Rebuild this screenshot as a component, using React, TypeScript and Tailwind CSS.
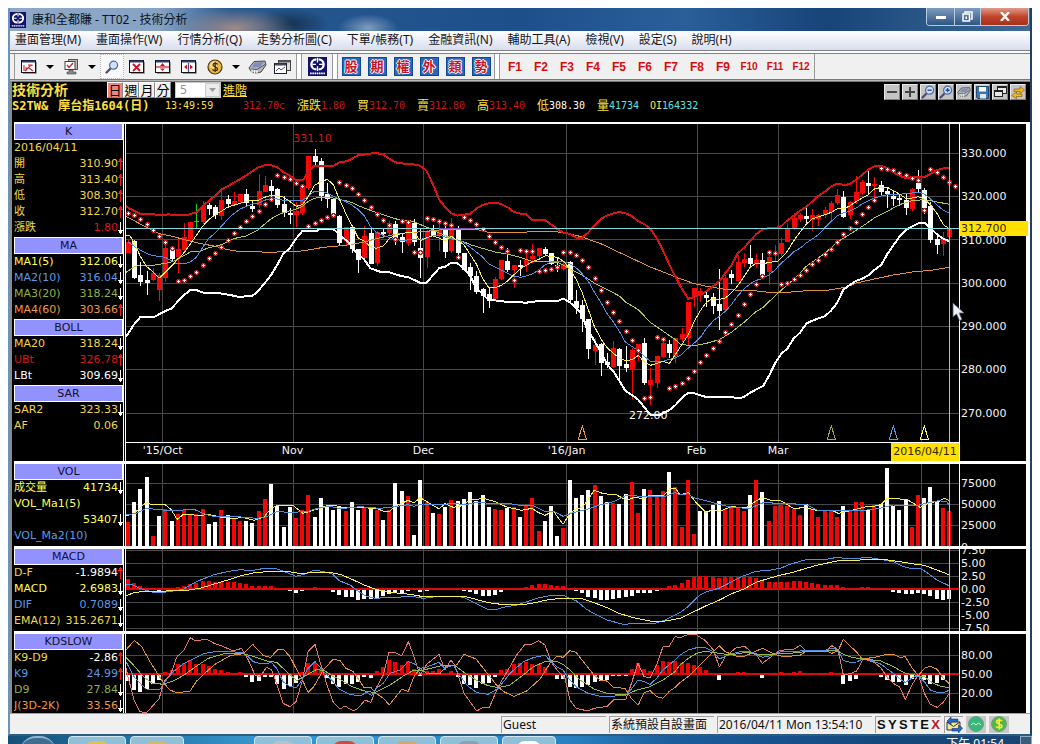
import React from 'react';
import clsx from 'clsx';

type Segment = [number, string];
type Tone = 'gold' | 'yellow' | 'blue' | 'green' | 'orange' | 'red' | 'white';

// Chart space: 3 units per pixel, plot area starts at x = 18
const STEP = 18.66;
const PLOT_LEFT = 18;
const PLOT_WIDTH = 2499;
const MONTH_LINES = [127, 520, 910, 1339, 1733, 1975, 2404];
const CURSOR_X = 2488;

const snap = (v: number) => Math.round((v - PLOT_LEFT) / 3) * 3 + PLOT_LEFT;
const barX = (i: number) => snap(25 + STEP * i - 7);

// open, high, low, close
const CANDLES: number[][] = [
  [404, 365, 404, 372], [370, 365, 484, 480], [471, 432, 503, 491], [486, 460, 530, 495], [486, 450, 490, 465],
  [516, 465, 548, 471], [480, 375, 492, 390], [390, 385, 430, 423], [417, 365, 465, 393], [396, 315, 400, 357],
  [363, 312, 370, 312], [310, 258, 330, 310], [312, 249, 318, 264], [261, 255, 291, 273], [267, 260, 302, 290],
  [294, 213, 306, 246], [243, 231, 270, 258], [262, 222, 264, 249], [253, 228, 258, 228], [228, 213, 264, 254],
  [264, 250, 282, 273], [261, 168, 270, 219], [222, 174, 222, 201], [204, 186, 240, 218], [213, 210, 270, 261],
  [258, 235, 297, 285], [285, 270, 318, 291], [291, 252, 327, 279], [285, 200, 290, 207], [210, 114, 215, 114],
  [114, 93, 140, 132], [129, 120, 249, 234], [228, 195, 270, 243], [243, 240, 294, 291], [294, 290, 380, 375],
  [369, 327, 384, 327], [327, 321, 405, 393], [393, 393, 465, 426], [420, 324, 425, 354], [345, 333, 438, 438],
  [435, 340, 444, 342], [342, 330, 360, 348], [345, 309, 354, 315], [318, 309, 381, 360], [357, 345, 405, 372],
  [375, 306, 384, 312], [315, 303, 384, 372], [390, 330, 480, 420], [417, 335, 450, 339], [339, 320, 357, 354],
  [351, 315, 400, 336], [336, 310, 420, 402], [399, 300, 406, 333], [333, 324, 410, 405], [405, 405, 460, 456],
  [447, 435, 516, 474], [474, 460, 528, 522], [513, 510, 585, 534], [528, 510, 570, 549], [543, 477, 546, 483],
  [483, 426, 486, 426], [429, 390, 462, 456], [456, 441, 510, 441], [441, 426, 474, 447], [441, 395, 462, 426],
  [423, 378, 435, 414], [414, 390, 420, 390], [393, 387, 411, 408], [405, 405, 441, 438], [441, 420, 462, 453],
  [453, 432, 459, 438], [432, 430, 552, 546], [549, 516, 588, 570], [561, 546, 642, 603], [603, 603, 723, 693],
  [699, 660, 741, 681], [678, 675, 774, 735], [732, 705, 750, 741], [747, 669, 750, 690], [693, 690, 786, 744],
  [738, 684, 762, 750], [753, 690, 843, 696], [702, 678, 730, 678], [675, 660, 801, 795], [801, 750, 861, 786],
  [795, 714, 810, 714], [717, 665, 720, 675], [678, 666, 720, 705], [714, 660, 735, 660], [663, 630, 672, 648],
  [660, 552, 684, 552], [537, 510, 567, 510], [530, 510, 552, 518], [531, 522, 567, 540], [537, 525, 588, 564],
  [558, 453, 636, 579], [576, 470, 578, 480], [468, 456, 498, 480], [489, 410, 490, 432], [435, 405, 447, 423],
  [420, 381, 450, 438], [438, 408, 450, 426], [426, 405, 476, 471], [462, 405, 501, 417], [410, 381, 432, 405],
  [408, 360, 414, 375], [372, 315, 372, 333], [333, 285, 336, 300], [303, 285, 312, 291], [294, 261, 318, 303],
  [306, 273, 339, 290], [302, 288, 324, 292], [291, 267, 300, 276], [282, 250, 310, 255], [255, 213, 260, 231],
  [237, 219, 300, 297], [291, 248, 303, 252], [249, 174, 258, 222], [225, 186, 231, 192], [195, 158, 228, 204],
  [204, 177, 237, 198], [201, 189, 230, 222], [219, 207, 270, 228], [234, 219, 264, 243], [240, 228, 264, 246],
  [246, 225, 291, 270], [273, 210, 279, 213], [195, 156, 222, 213], [216, 210, 288, 270], [264, 252, 375, 366],
  [363, 354, 408, 381], [378, 342, 414, 360], [357, 330, 360, 330],
];

const SAR = [
  286, 292, 304, 319, 337, 355, 373, 391, 490, 487, 475, 463, 441, 421, 406, 388, 367, 346, 328, 310, 295, 280, 259, 244,
  172, 178, 184, 196, 205, 325, 315, 307, 297, 292, 192, 202, 211, 229, 247, 268, 289, 307, 322, 365, 310, 313, 403, 403,
  300, 304, 310, 316, 322, 418, 298, 307, 319, 334, 355, 373, 388, 400, 487, 397, 400, 400, 460, 457, 454, 447, 403, 403,
  412, 427, 448, 481, 517, 552, 583, 610, 640, 667, 697, 841, 838, 658, 664, 811, 805, 796, 781, 760, 733, 712, 691, 670,
  643, 619, 592, 559, 529, 499, 474, 403, 406, 499, 496, 484, 472, 457, 439, 427, 409, 394, 373, 349, 330, 313, 289, 268,
  247, 151, 154, 157, 166, 172, 181, 188, 278, 154, 163, 178, 193, 205,
];

// Bar tops; negative marks a down day
const VOLUME = [
  202, -141, -102, -66, 243, -183, 163, -198, 177, 165, 178, 177, 162, -207, -201, 165, -180, 192, 198, -198, -204, 168,
  132, -87, -153, -216, -156, 189, 165, 120, -186, -129, -153, -165, -153, 168, -141, -165, 156, -156, 165, -195, 165,
  -84, -108, 123, -240, -75, 140, -174, 177, -156, 135, -138, -132, -111, -138, -120, -156, 162, 165, -159, 157, -186,
  153, 129, 228, -198, -153, -243, 219, -75, -129, -120, -105, 90, -123, -142, 144, -147, -117, 81, 174, -102, 105, 126,
  108, -51, 96, 216, 75, 237, -168, -168, -150, -138, 162, 156, 159, 168, -120, 75, -111, 198, 153, 150, 153, 162, 180,
  -146, 162, 186, 165, 165, 186, -153, 165, 141, 141, -165, 150, -147, -39, -153, -165, -132, 216, 120, -129, -96, -138,
  159, 168,
];

const MACD_BARS = [
  30, 18, 9, 0, 0, -6, -4, 2, 6, 9, 15, 18, 24, 24, 22, 21, 21, 20, 18, 15, 9, 9, 9, 9, 0, 0, -6, -12, -6, 2, 6, 2, 0, -9,
  -18, -24, -24, -33, -30, -30, -28, -21, -15, -12, -12, -6, -3, -9, -6, -3, -2, 0, 0, 0, -6, -9, -15, -21, -21, -18, -9,
  -3, 2, 2, 6, 12, 15, 15, 12, 9, 9, 0, -6, -12, -24, -27, -33, -33, -30, -27, -24, -21, -12, -12, -12, -6, 2, 9, 12, 18,
  27, 36, 39, 39, 36, 33, 36, 36, 36, 36, 36, 33, 27, 21, 21, 21, 21, 24, 24, 21, 18, 15, 12, 12, 12, 6, 2, 2, 6, 6, 2, 0,
  0, -8, -12, -15, -15, -12, -15, -21, -30, -33, -30,
];

const KD_BARS = [
  -20, -48, -54, -45, -30, -18, 6, 12, 30, 33, 42, 30, 30, 24, 15, 12, 5, 2, 6, -9, -24, -21, -9, -9, -30, -45, -36, -27,
  6, 33, 33, 15, -12, -30, -40, -30, -30, -24, -9, -12, 9, 21, 42, 36, 27, 39, 15, -6, 9, 9, 15, 3, 9, -9, -30, -33, -42,
  -30, -27, -9, 12, 15, 30, 33, 36, 30, 30, 21, 0, -15, -15, -39, -42, -39, -33, -24, -21, -18, -6, -6, -6, 15, 33, 15, 9,
  27, 39, 36, 39, 33, 33, 27, 21, 12, 0, -18, 0, 0, 6, 6, 0, 0, -12, 0, 0, 6, 0, 6, 9, 0, 0, 0, 0, 6, 0, -30, -21, -15, 0,
  0, 0, -9, -18, -24, -24, -33, -15, -3, -18, -30, -27, -18, -3,
];

const MA5: Segment[] = [
  [0, '18,352 30,354 43,375 61,415 79,445 97,460 118,480 136,463 154,445 172,425 193,403 211,378 229,352 247,326 265,306 286,290 304,280 322,268 340,262 361,256 379,250 397,247 415,247 433,238 454,232 472,234 490,237 508,249 529,265 547,260 565,236 583,202 601,192 622,184 640,200 658,243 676,283 697,325 715,360 733,370 751,386 769,391 790,384 808,362 826,350'],
  [840, '0,348 20,344 43,345 61,368 79,360 97,353 118,360 136,370 154,354 172,368 190,378 211,410 229,438 247,480 265,507 286,509 304,502 322,490 340,472 361,452 379,442 397,431 415,425 436,413 454,415 472,418 490,430 508,450 529,485 547,525 565,575 583,625 604,665 622,690 640,706 658,720 676,728 697,725 715,712 733,732 751,742 772,736 790,730 808,736 826,710'],
  [1680, '0,688 25,650 43,610 61,578 79,553 97,542 118,544 136,540 154,525 172,505 193,474 211,447 229,436 247,438 268,433 292,430 304,420 322,400 340,370 361,341 379,318 397,303 415,297 436,290 454,283 472,272 490,272 508,265 529,250 547,240 565,230 583,213 604,208 622,208 640,218 658,228 676,240 697,240 715,236 733,243 751,260 772,288 790,320 808,332'],
];
const MA10: Segment[] = [
  [0, '25,373 43,385 61,396 79,406 97,413 118,415 136,418 154,428 172,438 193,437 211,432 229,418 247,390 265,362 286,345 304,325 322,305 340,288 361,273 379,265 397,258 415,256 433,247 454,241 472,243 490,247 508,246 529,249 547,247 565,235 583,220 601,219 622,225 640,235 658,243 676,250 697,262 715,275 733,293 751,325 769,343 790,352 808,358 826,362'],
  [840, '0,367 43,365 60,364 79,361 97,352 118,352 136,357 154,362 190,372 211,388 229,402 247,416 265,437 286,447 304,456 322,465 340,474 361,478 379,474 397,468 415,457 436,440 454,431 472,431 490,431 508,436 529,450 547,468 565,490 583,522 604,556 622,588 640,612 658,640 676,672 697,686 715,698 733,715 751,730 772,732 790,730 808,724 826,720'],
  [1680, '0,713 25,690 43,675 61,658 79,632 100,608 118,595 136,580 154,560 172,535 193,512 211,497 229,487 247,482 268,470 286,455 304,435 322,420 340,402 361,390 379,375 397,363 415,350 436,328 454,310 472,293 490,285 508,280 529,270 547,257 565,249 583,240 604,234 622,230 640,231 658,230 676,226 697,225 715,222 733,228 751,242 772,262 790,277 808,286'],
];
const MA20: Segment[] = [
  [0, '18,463 43,446 61,441 100,442 136,436 160,430 193,412 211,402 240,399 265,390 304,380 340,362 379,354 397,345 415,335 433,319 454,302 472,292 490,284 508,279 529,273 547,265 565,250 583,241 601,238 622,237 640,240 676,248 697,254 715,263 733,270 769,284 790,290 826,302'],
  [840, '0,306 25,307 43,312 79,327 118,345 154,360 190,371 211,380 247,391 286,402 322,408 361,418 397,430 436,431 472,433 490,441 508,452 547,472 583,495 622,515 658,534 676,552 715,575 751,613 790,640 826,665'],
  [1680, '0,678 25,682 50,682 79,676 118,665 154,643 193,612 229,580 250,568 268,550 300,520 340,485 379,445 436,405 472,372 508,350 547,325 583,300 622,280 658,260 697,248 733,245 772,252 808,259'],
];
const MA60: Segment[] = [
  [0, '18,295 61,318 118,347 154,354 193,365 229,374 286,385 322,395 355,400 400,401 454,403 490,401 529,401 565,396 610,388 655,384 697,379 733,372 769,362 808,353'],
  [840, '0,346 43,343 79,340 118,336 154,333 225,333 265,343 370,343 400,340 470,341 500,347 529,352 560,362 610,380 655,402 700,423 751,447 800,466'],
  [1680, '0,482 40,496 79,505 130,513 175,517 230,519 268,523 320,523 370,519 440,517 500,507 529,495 583,483 640,471 697,462 760,456 808,448'],
];
const UPPER: Segment[] = [
  [0, '18,265 35,275 61,288 79,288 130,291 145,289 160,291 205,290 229,283 247,266 265,250 286,233 304,215 340,195 379,172 415,148 433,142 454,142 472,148 490,162 508,172 529,187 550,186 565,160 583,143 601,143 640,144 658,133 680,130 697,122 715,111 740,109 765,104 790,110 808,122 826,133'],
  [840, '0,135 20,138 50,140 65,146 79,158 97,195 118,245 136,268 154,286 172,293 211,287 229,272 247,261 275,254 300,257 322,267 340,281 361,287 379,289 397,306 436,307 472,333 490,344 508,347 529,359 547,359 565,343 583,322 604,302 622,292 640,286 658,282 680,287 697,295 715,310 733,318 751,333 772,363 790,400 808,440 826,475'],
  [1680, '3,508 25,543 61,530 79,520 118,490 136,465 154,442 172,408 193,388 211,368 229,348 247,335 268,330 300,328 322,307 340,294 361,277 379,267 397,250 415,234 436,220 454,205 472,197 495,201 510,198 529,185 547,170 565,155 583,145 604,144 622,150 640,162 658,173 676,180 697,178 733,177 751,168 772,156 790,151 808,149'],
];
const LOWER: Segment[] = [
  [0, '18,657 40,622 61,597 103,597 118,588 136,579 154,572 172,552 190,533 211,516 229,516 250,524 300,526 340,533 361,538 379,534 397,534 415,518 433,497 454,470 472,440 490,407 508,392 529,361 547,339 592,339 600,332 640,333 658,350 676,365 690,378 697,390 715,408 733,425 751,451 780,461 808,463'],
  [840, '0,473 25,478 43,486 61,495 79,495 97,474 118,450 136,446 154,434 172,436 190,450 211,474 229,510 265,545 286,547 304,550 340,552 379,554 415,549 475,548 490,542 508,552 529,570 547,590 560,630 583,668 604,705 622,740 640,760 658,788 676,818 697,832 715,845 733,868 751,890 780,890 808,876 826,862'],
  [1680, '3,842 25,824 43,826 75,836 157,837 170,841 190,838 211,824 250,803 268,772 286,734 304,707 322,692 340,663 361,643 379,617 397,608 436,594 454,577 472,554 490,515 508,502 529,488 547,482 565,472 583,456 604,440 622,408 640,382 658,357 676,337 697,325 715,316 735,315 751,330 772,350 790,362 808,370'],
];
const VOL_MA5: Segment[] = [
  [-360, '378,183 402,175 430,150 440,142 456,150 495,149 513,163 531,193 552,177 600,182 625,178 660,186 700,190 730,188 762,196 792,186 813,160 831,151 880,152 909,175 960,160 985,150 1010,153'],
  [660, '0,157 60,158 108,160 130,168 150,168 165,153 183,146 204,136 222,144 240,128 258,138 297,162 315,146 340,157 360,154 390,136 430,130 465,140 500,156 545,166 576,160 594,172 615,181 640,168 669,208 690,175 708,162 726,158 744,135 762,106 790,116 830,120 860,136 880,128 912,130 930,120 970,123 990,101 1007,100'],
  [1680, '0,120 25,113 50,145 79,174 99,162 117,170 153,155 200,158 225,140 247,127 270,135 300,136 340,160 378,158 414,167 453,165 475,175 520,165 560,155 600,152 621,130 680,133 720,157 750,142 775,140 793,130 807,136'],
];
const VOL_MA10: Segment[] = [
  [-360, '378,180 410,175 440,160 520,168 580,162 610,176 640,184 700,184 770,190 800,185 831,170 870,172 920,170 960,158 990,154'],
  [660, '0,161 60,155 120,160 165,155 204,149 222,154 250,147 300,149 345,145 372,150 408,142 465,146 510,146 545,152 580,152 615,170 640,168 669,184 700,173 744,162 780,150 820,140 860,120 912,125 970,126 1005,113'],
  [1680, '0,120 25,116 40,128 70,135 117,148 160,158 210,160 250,143 330,146 378,149 414,166 480,168 560,165 600,160 640,150 715,151 740,144 775,137 800,140 807,150'],
];
const DIF: Segment[] = [
  [-360, '378,387 400,390 420,400 438,406 460,412 490,412 520,408 552,402 580,385 606,373 640,360 681,350 720,344 756,347 792,340 825,340 849,348 888,364 920,356 942,345 960,348 981,352 999,358 1017,376'],
  [660, '0,378 30,390 54,408 75,422 105,430 135,428 183,426 210,423 250,430 280,426 315,425 350,423 372,428 408,445 444,463 470,463 490,457 530,450 560,440 590,430 625,423 670,421 690,430 708,437 740,463 770,480 801,495 850,508 880,506 940,507 975,495 1005,480'],
  [1680, '0,473 20,458 42,436 60,420 79,410 117,400 150,383 192,362 228,349 267,346 303,339 330,328 378,314 440,313 471,307 510,312 564,307 600,313 639,320 670,335 690,340 720,340 740,352 771,375 807,392'],
];
const MACD: Segment[] = [
  [-360, '378,422 400,414 430,409 470,409 530,407 560,406 600,400 640,388 680,376 720,363 760,354 800,350 860,349 905,356 940,352 990,352'],
  [660, '0,358 36,373 72,390 108,403 150,412 210,418 250,425 300,425 350,424 380,426 408,433 444,443 483,448 540,450 580,444 630,433 690,429 730,432 762,443 801,458 837,475 876,487 930,498 975,498'],
  [1680, '0,490 42,470 79,452 117,436 153,417 192,402 228,382 267,370 303,360 339,352 378,340 414,330 471,318 540,315 600,312 640,317 696,326 732,331 771,345 807,359'],
];
const K9: Segment[] = [
  [-360, '378,620 402,665 425,690 438,702 480,703 495,680 520,650 552,625 580,612 610,596 650,589 730,592 760,620 785,627 815,623 830,640 849,680 870,695 890,697 906,675 924,640 945,620 970,648 999,680 1017,702'],
  [660, '0,703 30,718 60,723 80,712 95,722 108,700 130,685 150,655 180,645 205,620 222,626 240,640 260,636 297,622 315,640 340,630 355,655 380,690 410,713 444,718 475,700 510,655 550,620 580,608 615,600 633,620 651,636 669,645 687,672 708,695 744,715 790,726 858,720 876,700 894,675 912,680 930,688 950,670 969,645 1005,615'],
  [1680, '0,600 25,585 50,578 75,577 100,590 118,612 150,598 190,588 215,592 247,607 280,600 303,590 340,590 378,586 435,587 453,580 472,583 490,617 510,622 530,621 547,612 565,613 604,628 622,642 640,655 658,670 676,683 697,668 715,662 733,680 751,705 772,712 790,713 808,706'],
];
const D9: Segment[] = [
  [-360, '378,608 400,630 430,665 456,684 490,688 520,678 552,660 580,640 625,610 670,597 725,595 760,604 800,618 830,622 860,650 890,677 920,660 950,643 975,648 1000,665'],
  [660, '0,673 36,695 70,707 105,713 150,690 190,663 222,645 250,645 300,633 345,632 380,658 408,675 444,692 475,698 510,690 550,660 580,635 615,620 651,620 669,628 690,645 720,675 762,702 801,715 858,720 890,705 930,695 969,675 1005,650'],
  [1680, '0,630 25,610 50,595 75,589 118,595 150,600 200,592 250,600 290,597 340,594 390,588 440,588 472,587 490,598 520,608 550,612 600,617 640,635 676,655 715,662 733,665 760,685 780,693 808,699'],
];
const J_PINK: Segment[] = [
  [-360, '378,640 384,665 402,735 420,770 440,773 465,745 477,732 492,680 513,655 531,605 552,585 570,548 588,558 620,552 642,565 663,572 700,588 725,580 745,615 765,660 780,665 800,637 815,645 828,680 849,745 870,755 888,740 906,680 924,590 945,568 960,620 981,690 999,740'],
  [660, '0,762 15,753 40,768 54,760 75,735 93,742 108,700 130,660 147,592 165,592 185,603 205,560 222,605 240,660 260,628 297,598 315,645 333,615 345,632 372,715 390,740 410,768 430,757 448,757 475,695 510,635 530,600 555,568 575,568 595,557 615,570 633,620 651,645 675,670 690,735 708,760 744,768 762,760 801,754 820,735 858,733 876,680 894,625 912,665 930,668 950,630 969,575 987,575 1005,545'],
  [1680, '0,548 25,538 50,540 75,556 100,585 118,636 136,605 170,577 195,575 215,592 229,600 247,625 280,600 300,586 340,583 361,571 379,588 436,588 456,572 474,584 490,660 510,656 530,648 550,612 583,622 604,640 622,668 640,685 658,695 676,733 697,688 715,660 733,715 751,748 772,757 790,742 808,715'],
];
const J_ORANGE: Segment[] = [
  [-360, '378,585 403,556 425,575 450,620 490,683 510,705 530,713 570,709 590,678 620,650 645,628 690,602 730,596 758,568 790,602 812,607 835,582 850,583 870,605 888,640 906,672 924,712 940,697 970,645 1000,612'],
  [660, '0,617 18,640 40,650 72,697 93,698 108,715 130,730 148,750 185,703 205,709 222,665 240,640 260,655 300,655 320,632 350,630 372,598 408,612 430,640 475,697 495,712 522,724 560,708 600,672 633,620 651,603 669,607 690,587 708,592 730,620 762,660 780,675 800,678 820,697 855,700 876,733 895,750 912,713 930,707 950,725 969,730 987,710 1005,697'],
  [1680, '0,683 30,660 60,630 100,590 118,572 136,590 172,605 195,603 247,580 290,600 310,605 360,601 379,588 440,588 455,595 474,588 490,553 510,573 529,590 547,612 583,607 622,598 640,598 660,607 676,605 697,640 715,662 733,640 751,634 772,643 790,670 808,686'],
];

const toPoints = (segments: Segment[]) =>
  segments
    .flatMap(([dx, pts]) =>
      pts.split(' ').map((p) => {
        const [x, y] = p.split(',').map(Number);
        return `${x + dx},${y}`;
      })
    )
    .join(' ');

const Line = ({ data, color, width = 1 }: { data: Segment[]; color: string; width?: number }) => (
  <polyline
    points={toPoints(data)}
    fill="none"
    stroke={color}
    strokeWidth={width}
    strokeLinejoin="round"
    vectorEffect="non-scaling-stroke"
  />
);

const Plot = ({ top, height, rows, className, children }: {
  top: number;
  height: number;
  rows: number[];
  className: string;
  children: React.ReactNode;
}) => (
  <svg
    className={clsx('block w-full', className)}
    viewBox={`${PLOT_LEFT} ${top} ${PLOT_WIDTH} ${height}`}
    preserveAspectRatio="none"
    shapeRendering="crispEdges"
  >
    {rows.map((y) => (
      <rect key={y} x={PLOT_LEFT} y={y - 1} width={PLOT_WIDTH} height="3" fill="#484848" />
    ))}
    {MONTH_LINES.map((x) => (
      <rect key={x} x={snap(x - 1)} y={top} width="3" height={height} fill="#484848" />
    ))}
    {children}
    <rect x={snap(CURSOR_X - 1)} y={top} width="3" height={height} fill="#70d8d8" />
  </svg>
);

const Histogram = ({ values, base }: { values: number[]; base: number }) => (
  <>
    {values.map((v, i) =>
      v > 0 ? (
        <rect key={i} x={barX(i)} y={base - v} width="12" height={v} fill="#f00000" />
      ) : (
        <rect key={i} x={barX(i)} y={base} width="12" height={-v} fill="#ffffff" />
      )
    )}
    <rect x={PLOT_LEFT} y={base - 2} width={PLOT_WIDTH} height="5" fill="#e00808" />
  </>
);

// Parabolic SAR mark: white plus inside a red dot
const SarDot = ({ x, y }: { x: number; y: number }) => (
  <>
    <path d={`M${x - 6} ${y - 3}h3v-3h9v3h3v9h-3v3h-9v-3h-3z`} fill="#c81414" />
    <path d={`M${x - 3} ${y}h3v-3h3v3h3v3h-3v3h-3v-3h-3z`} fill="#fff" />
  </>
);

const Scale = ({ labels, className }: { labels: [string, number][]; className: string }) => (
  <svg className={clsx('block w-full', className)}>
    {labels.map(([label, y]) => (
      <text key={label} x="1" y={y} fill="#f4f4f4" fontSize="11">
        {label}
      </text>
    ))}
  </svg>
);

const TONES: Record<Tone, string> = {
  gold: 'text-[#f0d84a]',
  yellow: 'text-[#ffff50]',
  blue: 'text-[#5a9ae6]',
  green: 'text-[#8fb43c]',
  orange: 'text-[#ee9840]',
  red: 'text-[#d81818]',
  white: 'text-white',
};

interface Reading {
  label: string;
  value?: string;
  tone: Tone;
  valueTone?: Tone;
  dir?: 'up' | 'down';
}

const Arrow = ({ dir }: { dir?: 'up' | 'down' }) => (
  <svg width="5" height="12" viewBox="0 0 5 12" className="shrink-0" shapeRendering="crispEdges">
    {dir === 'up' && <path d="M2 0h1v1h1v2h1v1H3v8H2V4H0V3h1V1h1z" fill="#f01818" />}
    {dir === 'down' && <path d="M2 12h1v-1h1V9h1V8H3V0H2v8H0v1h1v2h1z" fill="#fff" />}
  </svg>
);

const Readings = ({ title, rows }: { title: string; rows: Reading[] }) => (
  <section>
    <h2 className="h-4 border border-t-0 border-white bg-[#9292ff] text-center leading-[15px] text-[#101030]">{title}</h2>
    <dl>
      {rows.map((r) => (
        <div key={r.label} className={clsx('flex h-4 items-center whitespace-nowrap', TONES[r.tone])}>
          <dt>{r.label}</dt>
          <dd className={clsx('ml-auto flex items-center', r.valueTone && TONES[r.valueTone])}>
            {r.value}
            <Arrow dir={r.dir} />
          </dd>
        </div>
      ))}
    </dl>
  </section>
);

const Panel = ({ side, plot, scale, className }: {
  side: React.ReactNode;
  plot: React.ReactNode;
  scale: React.ReactNode;
  className: string;
}) => (
  <div className={clsx('flex bg-black', className)}>
    <div className="mr-px w-[110px] shrink-0 overflow-hidden border-r border-white">{side}</div>
    <div className="relative min-w-0 flex-1 border-x border-white">{plot}</div>
    <div className="relative w-[66px] shrink-0">{scale}</div>
  </div>
);

const K_ROWS: Reading[] = [
  { label: '2016/04/11', tone: 'gold' },
  { label: '開', value: '310.90', tone: 'gold', dir: 'up' },
  { label: '高', value: '313.40', tone: 'gold', dir: 'up' },
  { label: '低', value: '308.30', tone: 'gold', dir: 'up' },
  { label: '收', value: '312.70', tone: 'gold', dir: 'up' },
  { label: '漲跌', value: '1.80', tone: 'gold', valueTone: 'red', dir: 'down' },
];
const MA_ROWS: Reading[] = [
  { label: 'MA1(5)', value: '312.06', tone: 'yellow', dir: 'down' },
  { label: 'MA2(10)', value: '316.04', tone: 'blue', dir: 'down' },
  { label: 'MA3(20)', value: '318.24', tone: 'green', dir: 'down' },
  { label: 'MA4(60)', value: '303.66', tone: 'orange', dir: 'up' },
];
const BOLL_ROWS: Reading[] = [
  { label: 'MA20', value: '318.24', tone: 'gold', dir: 'down' },
  { label: 'UBt', value: '326.78', tone: 'red', dir: 'up' },
  { label: 'LBt', value: '309.69', tone: 'white', dir: 'down' },
];
const SAR_ROWS: Reading[] = [
  { label: 'SAR2', value: '323.33', tone: 'gold', dir: 'down' },
  { label: 'AF', value: '0.06', tone: 'gold' },
];
const VOL_ROWS: Reading[] = [
  { label: '成交量', value: '41734', tone: 'yellow', dir: 'down' },
  { label: 'VOL_Ma1(5)', tone: 'yellow' },
  { label: '', value: '53407', tone: 'yellow', dir: 'down' },
  { label: 'VOL_Ma2(10)', tone: 'blue' },
];
const MACD_ROWS: Reading[] = [
  { label: 'D-F', value: '-1.9894', tone: 'gold', valueTone: 'white', dir: 'up' },
  { label: 'MACD', value: '2.6983', tone: 'yellow', dir: 'down' },
  { label: 'DIF', value: '0.7089', tone: 'blue', dir: 'down' },
  { label: 'EMA(12)', value: '315.2671', tone: 'gold', dir: 'down' },
];
const KD_ROWS: Reading[] = [
  { label: 'K9-D9', value: '-2.86', tone: 'gold', valueTone: 'white', dir: 'up' },
  { label: 'K9', value: '24.99', tone: 'blue', dir: 'up' },
  { label: 'D9', value: '27.84', tone: 'green', dir: 'down' },
  { label: 'J(3D-2K)', value: '33.56', tone: 'orange', dir: 'down' },
];

const MENU = [
  '畫面管理(M)', '畫面操作(W)', '行情分析(Q)', '走勢分析圖(C)', '下單/帳務(T)',
  '金融資訊(N)', '輔助工具(A)', '檢視(V)', '設定(S)', '說明(H)',
];

const MONTHS: [string, string][] = [
  ["'15/Oct", '4.4%'], ['Nov', '20%'], ['Dec', '35.7%'], ["'16/Jan", '52.9%'], ['Feb', '68.5%'], ['Mar', '78.3%'],
];

const MARKERS: [number, string][] = [[1387, '#f09848'], [2134, '#8fb43c'], [2320, '#5a9ae6'], [2413, '#ffff50']];

const Logo = ({ size }: { size: number }) => (
  <svg width={size} height={size} viewBox="0 0 18 18">
    <rect width="18" height="18" fill="#12126e" />
    <path d="M8 2.2a4.8 4.8 0 0 0 0 9.600M10 2.2a4.8 4.8 0 0 1 0 9.600" fill="none" stroke="#fff" strokeWidth="2.2" />
    <path d="M9 .8v4.400M9 8.800v4.400M4 7h3.500M10.500 7H14" stroke="#fff" strokeWidth="1.2" />
    <path d="M2 15.6h14" stroke="#fff" strokeWidth="1.6" strokeDasharray="1.5 .6" />
  </svg>
);

const Frame = ({ children }: { children: React.ReactNode }) => (
  <svg width="16" height="14" viewBox="0 0 16 14">
    <path d="M2 13.5h13.5V2" stroke="#999" fill="none" />
    <rect x=".5" y=".5" width="14" height="12" fill="#fff" stroke="#111" />
    <path d="M1 1.5h13" stroke="#2b3a78" strokeWidth="2" />
    {children}
  </svg>
);

const Lens = ({ sign }: { sign?: string }) => (
  <svg width="14" height="14" viewBox="0 0 14 14">
    <path d="M1.5 12.5l4-4" stroke="#5a4a70" strokeWidth="2.4" strokeLinecap="round" />
    <circle cx="8.6" cy="5.2" r="4" fill="#cfe2f8" stroke="#4a6aa0" strokeWidth="1.2" />
    {sign && <path d={sign} stroke="#1c4f9c" strokeWidth="1.4" />}
  </svg>
);

const Printer = () => (
  <svg width="19" height="14" viewBox="0 0 19 14">
    <path d="M1 8l5-6.5L17 1l1 4-5 7-4 1-5-.5z" fill="#b4b8be" stroke="#444" />
    <path d="M6.5 2.5L16 2l-4 5-8 .5z" fill="#7f8cc0" />
    <path d="M3 9l6 .5 8-5" stroke="#555" fill="none" />
    <path d="M4 13V9.5M6.5 13.5V10M9 13.5V10" stroke="#fff" strokeWidth="1.2" />
  </svg>
);

const ToolButton = ({ label, className = 'w-[26px]', children }: {
  label: string;
  className?: string;
  children: React.ReactNode;
}) => (
  <button type="button" aria-label={label} className={clsx('flex h-full shrink-0 items-center justify-center', className)}>
    {children}
  </button>
);

const DropArrow = ({ label }: { label: string }) => (
  <ToolButton label={label} className="w-4">
    <svg width="8" height="4" viewBox="0 0 8 4"><path d="M0 0h8L4 4z" fill="#000" /></svg>
  </ToolButton>
);

const Divider = () => <span className="h-full w-1.5 shrink-0 border-x border-[#9a9a9a] bg-white" />;

const Toolbar = () => (
  <div role="toolbar" className="flex h-[25px] items-center overflow-hidden bg-[#f0f0f0] pl-1">
    <span className="mr-px h-full w-px bg-[#9a9a9a]" />
    <ToolButton label="版面">
      <Frame><path d="M3 5v6M5 7v4M4 11l6-6M7 5h4v1M8 8l4 3" stroke="#d02030" strokeWidth="1.1" fill="none" /></Frame>
    </ToolButton>
    <DropArrow label="版面選單" />
    <ToolButton label="螢幕">
      <svg width="15" height="16" viewBox="0 0 15 16">
        <rect x="4.5" y=".5" width="9" height="10" fill="#bbb" stroke="#555" />
        <rect x="1" y="2.5" width="10" height="8" fill="#fff" stroke="#444" />
        <path d="M3 6l2 2.5L9 4" stroke="#d02030" strokeWidth="1.4" fill="none" />
        <path d="M5 11h4v2h3v2H3v-2h2z" fill="#8a8a8a" stroke="#444" strokeWidth=".6" />
      </svg>
    </ToolButton>
    <DropArrow label="螢幕選單" />
    <ToolButton label="放大鏡" className="w-6 border border-dotted border-[#b8b8b8] bg-[#f9f9fb]"><Lens /></ToolButton>
    <ToolButton label="關閉視窗"><Frame><path d="M4 4l7 7M11 4l-7 7" stroke="#d01020" strokeWidth="1.8" /></Frame></ToolButton>
    <ToolButton label="上下分割">
      <Frame><path d="M1 7h13" stroke="#d01020" strokeWidth="1.2" /><path d="M5 6h5L7.5 3zM5 8.5h5L7.5 11z" fill="#d01020" /></Frame>
    </ToolButton>
    <ToolButton label="左右分割">
      <Frame><path d="M7.5 3v9" stroke="#3a4a80" strokeWidth="1.2" /><path d="M6 4.5v5L3 7zM9 4.5v5L12 7z" fill="#d01020" /></Frame>
    </ToolButton>
    <ToolButton label="報價">
      <svg width="16" height="16" viewBox="0 0 16 16">
        <circle cx="8" cy="8" r="7" fill="#e8b840" stroke="#4a3a18" strokeWidth="1.2" />
        <circle cx="6.5" cy="6" r="3.5" fill="#f8dc88" />
        <path d="M10.5 5.5C10 4 6 4 6 6s4.5 1.800 4.500 4-4.500 2-5 .4M8.200 3v10" stroke="#3a2a08" strokeWidth="1.2" fill="none" />
      </svg>
    </ToolButton>
    <DropArrow label="報價選單" />
    <ToolButton label="列印"><Printer /></ToolButton>
    <ToolButton label="多重視窗">
      <svg width="18" height="14" viewBox="0 0 18 14">
        <rect x="4.5" y=".5" width="12" height="10" fill="#ddd" stroke="#444" />
        <path d="M5 1.5h11" stroke="#556" strokeWidth="2" />
        <rect x=".5" y="3.5" width="12" height="10" fill="#fff" stroke="#222" />
        <path d="M1 4.5h11" stroke="#445" strokeWidth="2" />
        <path d="M2 11l3-3 2 2 4-3" stroke="#3a4a90" fill="none" />
      </svg>
    </ToolButton>
    <Divider />
    <ToolButton label="康和" className="w-[30px]"><Logo size={19} /></ToolButton>
    <Divider />
    <div className="flex h-full">
      {['股', '期', '權', '外', '類', '勢'].map((c) => (
        <button key={c} type="button" className="flex w-[26px] items-center justify-center">
          <span className="size-[19px] border border-[#0c4a98] bg-[#2468c0] text-center text-[13px] font-bold leading-[16px] text-[#c81424] [text-shadow:1px_0_#fff,-1px_0_#fff,0_1px_#fff,0_-1px_#fff]">
            {c}
          </span>
        </button>
      ))}
    </div>
    <Divider />
    <div className="ml-0.5 flex h-full border-r border-[#9a9a9a]">
      {['F1', 'F2', 'F3', 'F4', 'F5', 'F6', 'F7', 'F8', 'F9', 'F10', 'F11', 'F12'].map((k) => (
        <button
          key={k}
          type="button"
          className={clsx(
            "w-[26px] text-center font-['Liberation_Sans',sans-serif] font-bold text-[#d80c0c]",
            k.length > 2 ? 'text-[10px]' : 'text-[12px]'
          )}
        >
          {k}
        </button>
      ))}
    </div>
  </div>
);

const TitleBar = () => (
  <header className="flex h-[23px] items-center overflow-hidden bg-[radial-gradient(ellipse_60px_20px_at_225px_20px,#a08a88,transparent),radial-gradient(ellipse_40px_16px_at_280px_16px,#16324f,transparent),radial-gradient(ellipse_30px_14px_at_358px_20px,#7f9dc0,transparent),linear-gradient(90deg,#8fa9c8_0,#86a2c4_150px,#27588f_220px,#1d4f8b_50%,#2a5f9a_66%,#174479_80%,#3e6a96_100%)]">
    <Logo size={16} />
    <h1 className="ml-1.5 text-[12px] text-[#0a1420]">康和全都賺 - TT02 - 技術分析</h1>
    <div className="mr-px ml-auto flex h-[18px] self-start overflow-hidden rounded-b border border-t-0 border-[#b8cade] text-white">
      <button type="button" aria-label="最小化" className="flex w-[28px] items-end justify-center border-r border-[#b8cade] bg-linear-to-b from-[#7f9cc0] to-[#2f5584] pb-1.5">
        <span className="h-[3px] w-2.5 bg-white" />
      </button>
      <button type="button" aria-label="還原" className="flex w-[26px] items-center justify-center border-r border-[#b8cade] bg-linear-to-b from-[#7f9cc0] to-[#2f5584]">
        <svg width="11" height="11" viewBox="0 0 11 11" fill="none" stroke="#fff" strokeWidth="1.5">
          <path d="M3 2.5V1h7v7H8.500" /><rect x="1" y="3" width="6.5" height="7" /><path d="M4.2 5.5v2.500" />
        </svg>
      </button>
      <button type="button" aria-label="關閉" className="flex w-[47px] items-center justify-center bg-linear-to-b from-[#e09a88] via-[#c0442c] to-[#a83018]">
        <svg width="10" height="9" viewBox="0 0 10 9" stroke="#fff" strokeWidth="2.4"><path d="M1 0l8 9M9 0L1 9" /></svg>
      </button>
    </div>
  </header>
);

const MiniButton = ({ label, children }: { label: string; children: React.ReactNode }) => (
  <button type="button" aria-label={label} className="flex size-4 items-center justify-center border border-[#e8e8e8] border-r-[#808080] border-b-[#808080] bg-[#c4c4c4]">
    {children}
  </button>
);

const QUOTES: [string, string, string][] = [
  ['漲跌', '1.80', 'text-[#c81818]'],
  ['買', '312.70', 'text-[#c81818]'],
  ['賣', '312.80', 'text-[#c81818]'],
  ['高', '313.40', 'text-[#c81818]'],
  ['低', '308.30', 'text-white'],
];

const Header = () => (
  <div className="h-10 bg-black text-[12px] text-[#ffe040]">
    <div className="flex h-4 items-start">
      <h2 className="w-[95px] text-[14px] font-bold leading-4">技術分析</h2>
      <div className="flex h-4">
        {['日', '週', '月', '分'].map((p) => (
          <button
            key={p}
            type="button"
            className={clsx(
              'w-4 border border-white border-r-[#888] border-b-[#888] text-[13px] leading-[14px] text-black',
              p === '日' ? 'bg-[#f08484]' : 'bg-[#f0f0f0]'
            )}
          >
            {p}
          </button>
        ))}
      </div>
      <div className="relative ml-1 h-4 w-[46px] bg-white">
        <select aria-label="分鐘" disabled className="block h-4 w-full appearance-none border border-[#c8c8c8] pl-1 text-[12px] leading-[14px] text-[#909090]">
          <option>5</option>
        </select>
        <span className="pointer-events-none absolute top-px right-px flex h-3.5 w-[15px] items-center justify-center border border-[#ccc] bg-[#ececec]">
          <svg width="7" height="4" viewBox="0 0 7 4"><path d="M0 0h7L3.5 4z" fill="#999" /></svg>
        </span>
      </div>
      <a href="#advanced" className="ml-0.5 leading-[18px] underline">進階</a>
      <div className="mt-0.5 mr-1 ml-auto flex gap-0.5">
        <MiniButton label="縮小"><span className="h-0.5 w-2.5 bg-[#444]" /></MiniButton>
        <MiniButton label="放大"><svg width="10" height="10" viewBox="0 0 10 10" stroke="#444" strokeWidth="2"><path d="M5 0v10M0 5h10" /></svg></MiniButton>
        <MiniButton label="縮小鏡"><Lens sign="M6.5 5.200h4.200" /></MiniButton>
        <MiniButton label="放大鏡"><Lens sign="M6.5 5.200h4.200M8.600 3.100v4.200" /></MiniButton>
        <MiniButton label="列印"><Printer /></MiniButton>
        <MiniButton label="儲存">
          <svg width="13" height="13" viewBox="0 0 13 13">
            <path d="M.5.5h12v12h-11l-1-1z" fill="#3a74a8" stroke="#204a78" />
            <path d="M3 1h7v4.500H3z" fill="#fff" /><path d="M4 8h6v4.500H4z" fill="#dfe8f0" />
          </svg>
        </MiniButton>
        <MiniButton label="視窗">
          <svg width="13" height="12" viewBox="0 0 13 12" fill="#e8e8e8" stroke="#222">
            <rect x="3.5" y=".5" width="9" height="7" /><path d="M3.5 1.5h9" />
            <rect x=".5" y="4.5" width="8" height="6" /><path d="M.5 5.5h8" />
          </svg>
        </MiniButton>
        <MiniButton label="切換">
          <svg width="14" height="13" viewBox="0 0 14 13" fill="#f4b820" stroke="#7a5200" strokeWidth=".6">
            <path d="M3 3h6V.5L13.500 4 9 7.500V5.500H3zM11 8H5.500V6L.6 9.500l4.900 3v-2H11z" />
          </svg>
        </MiniButton>
      </div>
    </div>
    <div className="flex h-[15px] items-center font-['DejaVu_Sans_Mono','Noto_Sans_CJK_TC',monospace] whitespace-nowrap">
      <strong className="w-[153px]">S2TW&amp;<span className="ml-2.5">摩台指1604(日)</span></strong>
      <time className="w-[78px] text-[10px]">13:49:59</time>
      <span className="w-[54px] text-[10px] text-[#c81818]">312.70c</span>
      {QUOTES.map(([name, value, tone]) => (
        <span key={name} className="flex w-[60px] items-center">{name}<b className={clsx('text-[10px] font-normal', tone)}>{value}</b></span>
      ))}
      <span className="flex w-[53px] items-center">量<b className="text-[10px] font-normal text-[#60e0e0]">41734</b></span>
      <span className="text-[10px]">OI<b className="font-normal text-[#60e0e0]">164332</b></span>
    </div>
  </div>
);

const PriceChart = () => (
  <>
    <Plot top={18} height={954} rows={[106, 235, 364, 496, 625, 754, 886]} className="h-[318px]">
      {CANDLES.map(([open, high, low, close], i) => {
        const fill = open === close ? '#20d020' : close < open ? '#f40808' : '#ffffff';
        return (
          <g key={i} fill={fill}>
            <rect x={barX(i) + 6} y={high} width="3" height={low - high} />
            <rect x={barX(i)} y={Math.min(open, close)} width="15" height={Math.max(Math.abs(open - close), 3)} />
          </g>
        );
      })}
      <Line data={MA60} color="#e09040" />
      <Line data={MA20} color="#b4c850" />
      <Line data={MA10} color="#5090e0" />
      <Line data={MA5} color="#f8f050" />
      <Line data={UPPER} color="#d81414" width={2} />
      <Line data={LOWER} color="#ffffff" width={2} />
      {SAR.map((y, i) => (
        <SarDot key={i} x={barX(i) + 6} y={snap(y - 1)} />
      ))}
      <rect x={PLOT_LEFT} y="330" width={PLOT_WIDTH} height="3" fill="#80dce0" />
      <rect x="958" y="330" width="107" height="3" fill="#8050b0" />
      {MARKERS.map(([x, color]) => (
        <path key={x} d={`M${x} 924l-12 39h24z`} fill="none" stroke={color} strokeWidth="1" vectorEffect="non-scaling-stroke" />
      ))}
    </Plot>
    <svg className="absolute inset-x-0 top-0 h-[318px] w-full" fontSize="11" textAnchor="middle">
      <text x="22.4%" y="18" fill="#d01818">331.10</text>
      <text x="62.7%" y="295" fill="#fff">272.00</text>
    </svg>
    <div className="relative h-[19px] border-t border-white">
      <svg className="block h-[18px] w-full" fontSize="11" textAnchor="middle" fill="#f4f4f4">
        {MONTHS.map(([m, x]) => (
          <text key={m} x={x} y="11">{m}</text>
        ))}
      </svg>
      <time className="absolute top-0 right-0 h-[18px] w-[68px] bg-[#ffe000] text-center leading-[18px] text-[#302800]">2016/04/11</time>
    </div>
  </>
);

const Charts = () => (
  <main className="bg-white pt-0.5 pr-1 font-['DejaVu_Sans','Noto_Sans_CJK_TC',sans-serif] text-[11px]">
    <div className="flex flex-col gap-[3px]">
      <div className="relative">
        <Panel
          className="h-[337px]"
          side={
            <div className="flex flex-col divide-y divide-white">
              <div className="pb-px"><Readings title="K" rows={K_ROWS} /></div>
              <div className="pb-px"><Readings title="MA" rows={MA_ROWS} /></div>
              <div className="pb-px"><Readings title="BOLL" rows={BOLL_ROWS} /></div>
              <Readings title="SAR" rows={SAR_ROWS} />
            </div>
          }
          plot={<PriceChart />}
          scale={
            <>
              <Scale
                className="h-[337px]"
                labels={[['330.000', 33], ['320.000', 76], ['310.000', 120], ['300.000', 163], ['290.000', 206], ['280.000', 249], ['270.000', 293]]}
              />
              <output className="absolute top-[97px] -right-0.5 left-0 h-[15px] bg-[#ffe000] pl-px leading-[16px] text-[#302800]">312.700</output>
            </>
          }
        />
        <svg className="absolute top-[178px] right-[61px]" width="13" height="20" viewBox="0 0 13 20">
          <path d="M1 1v14l3.5-3 3 6.5 2.500-1-3-6.500H12z" fill="#f0f0fa" stroke="#555a70" strokeWidth=".8" />
        </svg>
      </div>
      <Panel
        className="h-[82px]"
        side={<Readings title="VOL" rows={VOL_ROWS} />}
        plot={
          <Plot top={27} height={246} rows={[85, 148, 211]} className="h-[82px]">
            {VOLUME.map((v, i) => (
              <rect key={i} x={barX(i)} y={Math.abs(v)} width="12" height={273 - Math.abs(v)} fill={v < 0 ? '#ffffff' : '#f00808'} />
            ))}
            <Line data={VOL_MA5} color="#f4f050" />
            <Line data={VOL_MA10} color="#5090e0" />
          </Plot>
        }
        scale={<Scale className="h-[82px]" labels={[['75000', 23], ['50000', 44], ['25000', 65], ['0', 87]]} />}
      />
      <Panel
        className="h-[82px]"
        side={<Readings title="MACD" rows={MACD_ROWS} />}
        plot={
          <Plot top={282} height={246} rows={[286, 325, 364, 442, 481, 520]} className="h-[82px]">
            <Histogram values={MACD_BARS} base={402} />
            <Line data={DIF} color="#5090e0" />
            <Line data={MACD} color="#f8f050" />
          </Plot>
        }
        scale={
          <Scale
            className="h-[82px]"
            labels={[['7.50', 5], ['5.00', 18], ['2.50', 31], ['0.00', 44], ['-2.50', 57], ['-5.00', 70], ['-7.50', 83]]}
          />
        }
      />
      <Panel
        className="h-[79px]"
        side={<Readings title="KDSLOW" rows={KD_ROWS} />}
        plot={
          <Plot top={537} height={237} rows={[601, 715]} className="h-[79px]">
            <Histogram values={KD_BARS} base={657} />
            <Line data={J_ORANGE} color="#e09038" />
            <Line data={J_PINK} color="#e07870" />
            <Line data={K9} color="#5090e0" />
            <Line data={D9} color="#94b840" />
          </Plot>
        }
        scale={<Scale className="h-[79px]" labels={[['80.00', 25], ['50.00', 44], ['20.00', 63]]} />}
      />
    </div>
  </main>
);

const StatusBar = () => (
  <footer className="flex h-[21px] items-center justify-end gap-[3px] border-t border-[#a0a0a0] bg-[#f0f0f0] pr-[21px] text-[12px] text-[#101010]">
    {[['Guest', 'w-[105px]'], ['系統預設自設畫面', 'w-[105px]'], ['2016/04/11 Mon 13:54:10', 'w-[155px]']].map(([text, w]) => (
      <span key={text} className={clsx('h-[17px] overflow-hidden border-t border-l border-[#a0a0a0] pl-px leading-[16px] whitespace-nowrap', w)}>
        {text}
      </span>
    ))}
    <span className="flex h-[17px] w-[66px] items-center justify-between border-t border-l border-[#a0a0a0] px-px font-['Liberation_Sans',sans-serif] text-[13px] font-bold">
      {'SYSTE'.split('').map((c, i) => <span key={i}>{c}</span>)}
      <span className="text-[#b02028]">X</span>
    </span>
    <button type="button" aria-label="連線" className="flex h-[17px] w-[19px] items-center justify-center border-t border-l border-[#a0a0a0]">
      <svg width="17" height="16" viewBox="0 0 17 16">
        <path d="M1 5h13v8H1z" fill="#f4e498" stroke="#333" /><path d="M1 5l6.5 4.5L14 5" fill="none" stroke="#333" />
        <path d="M1 4l4-4v2h7v2.500H5V8zM16.500 11l-4 5v-2H6v-2.500h6.500V8z" fill="#2468d0" stroke="#10306c" strokeWidth=".6" />
      </svg>
    </button>
    <button type="button" aria-label="行情" className="flex h-[17px] w-5 items-center justify-center bg-[#c8c8c8]">
      <svg width="16" height="16" viewBox="0 0 16 16"><circle cx="8" cy="8" r="7.5" fill="#38b878" stroke="#78988a" /><path d="M3 9l2.500-2L8 9l2.500-2L13 9" fill="none" stroke="#c8ffe0" /></svg>
    </button>
    <button type="button" aria-label="帳務" className="flex h-[17px] w-5 items-center justify-center bg-[#c8c8c8]">
      <svg width="16" height="16" viewBox="0 0 16 16">
        <circle cx="8" cy="8" r="7.5" fill="#50b848" stroke="#78988a" />
        <path d="M11 5.200C10 3.400 5.500 3.600 5.500 6s5.500 1.600 5.500 4-4.800 2.200-6 .4M8.200 2.500v11" fill="none" stroke="#f8ec40" strokeWidth="1.6" />
      </svg>
    </button>
  </footer>
);

const TASKS = ['w-[58px]', 'w-[54px]', 'w-[62px] border-transparent', 'w-[58px]', 'w-[58px]', 'w-[58px]', 'w-[58px]', 'w-[54px]'];
const TASK_ICONS = ['bg-[#e0c050]', 'bg-[#d8b860]', 'bg-transparent', 'bg-[#b8c0c8]', 'bg-[#d84838]', 'bg-[#d0a870]', 'bg-[#90a0a8]', 'bg-white'];

const Taskbar = () => (
  <nav className="flex h-2 items-start overflow-hidden bg-[linear-gradient(90deg,#145078_0,#2c84b8_18%,#3898d0_25%,#2880c0_55%,#1c5c9c_65%,#14487c_85%,#1a4470_100%)]">
    <button type="button" aria-label="開始" className="ml-3 h-8 w-9 rounded-full border-t-2 border-[#8cb8d0] bg-[#406c90]" />
    <div className="ml-3 flex gap-1">
      {TASKS.map((w, i) => (
        <button
          key={i}
          type="button"
          aria-label={`視窗 ${i + 1}`}
          className={clsx('flex h-8 justify-center rounded-t border border-[#d0e8f4] pt-1', w, i !== 2 && 'bg-[#90c0d8]')}
        >
          <span className={clsx('h-6 w-6 rounded-t-lg', TASK_ICONS[i])} />
        </button>
      ))}
    </div>
    <time className="mr-4 ml-auto text-[12px] leading-[16px] text-white">下午 01:54</time>
    <button type="button" aria-label="顯示桌面" className="h-8 w-3 border border-[#90a8c0] bg-[#385c80]" />
  </nav>
);

export default function App() {
  return (
    <div className="flex min-h-screen flex-col bg-white px-2 pt-2 font-['Noto_Sans','Noto_Sans_CJK_TC',sans-serif]">
      <div className="border-x-2 border-b-2 border-[#6c94b8] border-r-[#24405c] border-b-[#2c5c80]">
        <TitleBar />
        <nav className="flex h-[23px] items-start gap-[15px] overflow-hidden border-b-4 border-double border-[#808080] bg-linear-to-b from-white to-[#d8def0] px-[5px] text-[12px] whitespace-nowrap text-[#181818]">
          {MENU.map((m) => (
            <button key={m} type="button" className="h-[18px] leading-[16px]">{m}</button>
          ))}
        </nav>
        <Toolbar />
        <div className="h-[3px] border-y border-[#787878] bg-[#b8b8b8]" />
        <div className="border-l-2 border-[#8a8a8a] bg-black">
          <Header />
          <div className="border-l-2 border-black"><Charts /></div>
        </div>
        <StatusBar />
      </div>
      <Taskbar />
    </div>
  );
}
